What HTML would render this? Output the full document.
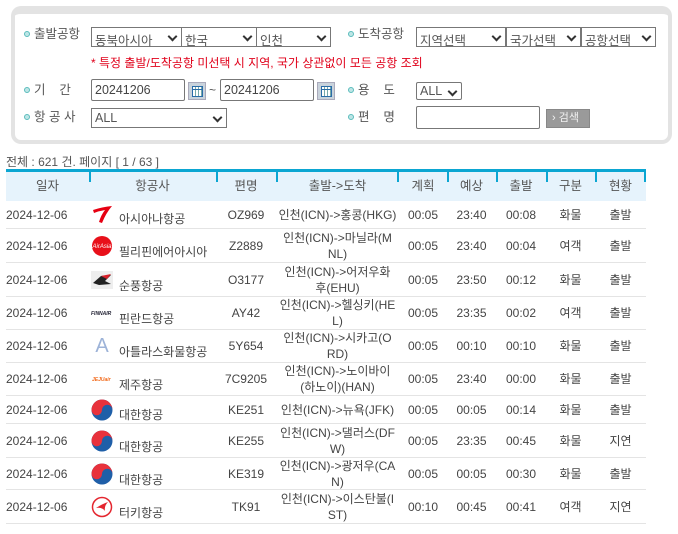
<!DOCTYPE html>
<html><head><meta charset="utf-8"><style>
*{margin:0;padding:0;box-sizing:border-box}
body{width:678px;height:534px;background:#fff;font-family:"Liberation Sans","Noto Sans CJK KR",sans-serif;font-size:12px;color:#444;position:relative;overflow:hidden}
.a{position:absolute}
.panel{left:11px;top:6px;width:661px;height:138px;border:4px solid #e3e3e3;border-top-width:8px;border-radius:10px;background:#fff}
.lbl{font-size:12.5px;color:#555;white-space:pre;line-height:14px}
.dot{width:6px;height:6px;border-radius:50%;border:1.5px solid #5bbcbc;background:#bde6e6}
.sel{border:1px solid #777;height:20px;font-size:12.5px;color:#555;padding:2px 0 0 3px;background:#fff}
.sel:after{content:"";position:absolute;right:5px;top:5px;width:5px;height:5px;border-right:2px solid #333;border-bottom:2px solid #333;transform:rotate(45deg)}
.inp{border:1px solid #777;border-radius:2px;height:22px;font-size:12.5px;color:#444;padding:3px 0 0 3px;background:#fff}
.cal{width:18px;height:18px;background:#c9d3dc;border:1px solid #aab}
.cal i{position:absolute;left:3px;top:3px;width:11px;height:11px;border:1px solid #2a6ca8;background:
linear-gradient(#2a6ca8,#2a6ca8) 0 2px/100% 1px no-repeat,
repeating-linear-gradient(90deg,transparent 0 2px,#7aa 2px 3px),#fff}
.hdr{left:6px;top:169px;width:640px;height:32px;background:#e6f3fc;border-top:3px solid #0ba6d2}
.hc{top:0;height:29px;line-height:28px;text-align:center;font-size:12.5px;color:#555}
.stub{top:0;width:2px;height:10px;background:#0ba6d2}
.row{left:6px;width:640px;border-bottom:1px solid #e4e4e4}
.c{position:absolute;top:0;height:100%;display:flex;align-items:center;justify-content:center;text-align:center;line-height:16px;font-size:12px;color:#444}
</style></head><body>
<div class="a panel"></div>

<div class="a dot" style="left:24px;top:31px"></div><div class="a lbl" style="left:34px;top:27px">출발공항</div>
<div class="a sel" style="left:91px;top:27px;width:91px">동북아시아</div>
<div class="a sel" style="left:181px;top:27px;width:76px">한국</div>
<div class="a sel" style="left:256px;top:27px;width:75px">인천</div>
<div class="a dot" style="left:348px;top:31px"></div><div class="a lbl" style="left:358px;top:27px">도착공항</div>
<div class="a sel" style="left:416px;top:27px;width:90px">지역선택</div>
<div class="a sel" style="left:506px;top:27px;width:75px">국가선택</div>
<div class="a sel" style="left:581px;top:27px;width:75px">공항선택</div>
<div class="a" style="left:91px;top:54px;color:#e0001a;font-size:12px">* 특정 출발/도착공항 미선택 시 지역, 국가 상관없이 모든 공항 조회</div>

<div class="a dot" style="left:24px;top:87px"></div><div class="a lbl" style="left:34px;top:83px">기    간</div>
<div class="a inp" style="left:91px;top:79px;width:94px">20241206</div>
<div class="a cal" style="left:188px;top:82px"><i></i></div>
<div class="a" style="left:209px;top:83px;color:#555">~</div>
<div class="a inp" style="left:220px;top:79px;width:94px">20241206</div>
<div class="a cal" style="left:317px;top:82px"><i></i></div>
<div class="a dot" style="left:348px;top:87px"></div><div class="a lbl" style="left:358px;top:83px">용    도</div>
<div class="a sel" style="left:416px;top:82px;width:46px;height:18px;border-radius:2px;padding-top:1px">ALL</div>

<div class="a dot" style="left:24px;top:114px"></div><div class="a lbl" style="left:34px;top:110px">항 공 사</div>
<div class="a sel" style="left:91px;top:108px;width:136px">ALL</div>
<div class="a dot" style="left:348px;top:114px"></div><div class="a lbl" style="left:358px;top:110px">편    명</div>
<div class="a inp" style="left:416px;top:106px;width:124px;height:23px"></div>
<div class="a" style="left:546px;top:109px;width:44px;height:19px;background:#9a9a9a;border:1px solid #888;color:#f2f2f2;font-size:11px;line-height:17px;padding-left:5px">› 검색</div>

<div class="a" style="left:6px;top:153px;color:#555;font-size:12px">전체 : 621 건. 페이지 [ 1 / 63 ]</div>

<div class="a hdr">
<div class="a hc" style="left:0;width:83px">일자</div>
<div class="a hc" style="left:83px;width:127px">항공사</div>
<div class="a hc" style="left:210px;width:60px">편명</div>
<div class="a hc" style="left:270px;width:123px">출발->도착</div>
<div class="a hc" style="left:393px;width:48px">계획</div>
<div class="a hc" style="left:441px;width:49px">예상</div>
<div class="a hc" style="left:490px;width:50px">출발</div>
<div class="a hc" style="left:540px;width:49px">구분</div>
<div class="a hc" style="left:589px;width:51px">현황</div>
<div class="a stub" style="left:83px"></div><div class="a stub" style="left:210px"></div><div class="a stub" style="left:270px"></div><div class="a stub" style="left:391px"></div><div class="a stub" style="left:441px"></div><div class="a stub" style="left:490px"></div><div class="a stub" style="left:540px"></div><div class="a stub" style="left:589px"></div><div class="a stub" style="left:638px"></div>
</div>

<div class="a row" style="top:201px;height:28px"><div class="c" style="left:0;width:83px;justify-content:flex-start">2024-12-06</div><div class="c" style="left:85px;width:125px;justify-content:flex-start"><svg width="22" height="20" viewBox="0 0 22 20"><path d="M2 5 Q11 2 21 1 Q15 8 11 18 L8 17 Q10 10 14 5 Q8 6 3 8Z" fill="#e60012"/></svg><span style="margin:8px 0 0 6px">아시아나항공</span></div><div class="c" style="left:210px;width:60px">OZ969</div><div class="c" style="left:270px;width:123px">인천(ICN)->홍콩(HKG)</div><div class="c" style="left:393px;width:48px">00:05</div><div class="c" style="left:441px;width:49px">23:40</div><div class="c" style="left:490px;width:50px">00:08</div><div class="c" style="left:540px;width:49px">화물</div><div class="c" style="left:589px;width:51px">출발</div></div>

<div class="a row" style="top:229px;height:34px"><div class="c" style="left:0;width:83px;justify-content:flex-start">2024-12-06</div><div class="c" style="left:85px;width:125px;justify-content:flex-start"><svg width="22" height="22"><circle cx="11" cy="11" r="10" fill="#e8101a"/><text x="11" y="13" font-size="6" fill="#fff" text-anchor="middle" font-style="italic">AirAsia</text></svg><span style="margin:12px 0 0 6px">필리핀에어아시아</span></div><div class="c" style="left:210px;width:60px">Z2889</div><div class="c" style="left:270px;width:123px">인천(ICN)->마닐라(M<br>NL)</div><div class="c" style="left:393px;width:48px">00:05</div><div class="c" style="left:441px;width:49px">23:40</div><div class="c" style="left:490px;width:50px">00:04</div><div class="c" style="left:540px;width:49px">여객</div><div class="c" style="left:589px;width:51px">출발</div></div>

<div class="a row" style="top:263px;height:34px"><div class="c" style="left:0;width:83px;justify-content:flex-start">2024-12-06</div><div class="c" style="left:85px;width:125px;justify-content:flex-start"><svg width="22" height="18"><rect width="22" height="18" fill="#eee"/><path d="M2 12 L10 5 L20 4 L14 10 L20 13 L8 14Z" fill="#222"/><path d="M10 5 L20 3 L16 8Z" fill="#d8202a"/></svg><span style="margin:12px 0 0 6px">순풍항공</span></div><div class="c" style="left:210px;width:60px">O3177</div><div class="c" style="left:270px;width:123px">인천(ICN)->어저우화<br>후(EHU)</div><div class="c" style="left:393px;width:48px">00:05</div><div class="c" style="left:441px;width:49px">23:50</div><div class="c" style="left:490px;width:50px">00:12</div><div class="c" style="left:540px;width:49px">화물</div><div class="c" style="left:589px;width:51px">출발</div></div>

<div class="a row" style="top:297px;height:33px"><div class="c" style="left:0;width:83px;justify-content:flex-start">2024-12-06</div><div class="c" style="left:85px;width:125px;justify-content:flex-start"><svg width="22" height="6"><text x="0" y="5" font-size="5" fill="#223" font-style="italic" font-weight="bold">FINNAIR</text></svg><span style="margin:12px 0 0 6px">핀란드항공</span></div><div class="c" style="left:210px;width:60px">AY42</div><div class="c" style="left:270px;width:123px">인천(ICN)->헬싱키(HE<br>L)</div><div class="c" style="left:393px;width:48px">00:05</div><div class="c" style="left:441px;width:49px">23:35</div><div class="c" style="left:490px;width:50px">00:02</div><div class="c" style="left:540px;width:49px">여객</div><div class="c" style="left:589px;width:51px">출발</div></div>

<div class="a row" style="top:330px;height:33px"><div class="c" style="left:0;width:83px;justify-content:flex-start">2024-12-06</div><div class="c" style="left:85px;width:125px;justify-content:flex-start"><span style="width:22px;font-size:20px;color:#9db3d8;font-family:'Liberation Sans',sans-serif">A</span><span style="margin:12px 0 0 6px">아틀라스화물항공</span></div><div class="c" style="left:210px;width:60px">5Y654</div><div class="c" style="left:270px;width:123px">인천(ICN)->시카고(O<br>RD)</div><div class="c" style="left:393px;width:48px">00:05</div><div class="c" style="left:441px;width:49px">00:10</div><div class="c" style="left:490px;width:50px">00:10</div><div class="c" style="left:540px;width:49px">화물</div><div class="c" style="left:589px;width:51px">출발</div></div>

<div class="a row" style="top:363px;height:33px"><div class="c" style="left:0;width:83px;justify-content:flex-start">2024-12-06</div><div class="c" style="left:85px;width:125px;justify-content:flex-start"><svg width="22" height="6"><text x="1" y="5" font-size="5" fill="#f26a1b" font-style="italic" font-weight="bold">JEJUair</text></svg><span style="margin:12px 0 0 6px">제주항공</span></div><div class="c" style="left:210px;width:60px">7C9205</div><div class="c" style="left:270px;width:123px">인천(ICN)->노이바이<br>(하노이)(HAN)</div><div class="c" style="left:393px;width:48px">00:05</div><div class="c" style="left:441px;width:49px">23:40</div><div class="c" style="left:490px;width:50px">00:00</div><div class="c" style="left:540px;width:49px">화물</div><div class="c" style="left:589px;width:51px">출발</div></div>

<div class="a row" style="top:396px;height:28px"><div class="c" style="left:0;width:83px;justify-content:flex-start">2024-12-06</div><div class="c" style="left:85px;width:125px;justify-content:flex-start"><svg width="22" height="22" viewBox="0 0 22 22"><circle cx="11" cy="11" r="10.5" fill="#1f5fa8"/><path d="M0.5 11 A10.5 10.5 0 0 1 21.5 11 A5.25 5.25 0 0 0 11 11 A5.25 5.25 0 0 1 0.5 11Z" fill="#e8323c"/></svg><span style="margin:10px 0 0 6px">대한항공</span></div><div class="c" style="left:210px;width:60px">KE251</div><div class="c" style="left:270px;width:123px">인천(ICN)->뉴욕(JFK)</div><div class="c" style="left:393px;width:48px">00:05</div><div class="c" style="left:441px;width:49px">00:05</div><div class="c" style="left:490px;width:50px">00:14</div><div class="c" style="left:540px;width:49px">화물</div><div class="c" style="left:589px;width:51px">출발</div></div>

<div class="a row" style="top:424px;height:34px"><div class="c" style="left:0;width:83px;justify-content:flex-start">2024-12-06</div><div class="c" style="left:85px;width:125px;justify-content:flex-start"><svg width="22" height="22" viewBox="0 0 22 22"><circle cx="11" cy="11" r="10.5" fill="#1f5fa8"/><path d="M0.5 11 A10.5 10.5 0 0 1 21.5 11 A5.25 5.25 0 0 0 11 11 A5.25 5.25 0 0 1 0.5 11Z" fill="#e8323c"/></svg><span style="margin:12px 0 0 6px">대한항공</span></div><div class="c" style="left:210px;width:60px">KE255</div><div class="c" style="left:270px;width:123px">인천(ICN)->댈러스(DF<br>W)</div><div class="c" style="left:393px;width:48px">00:05</div><div class="c" style="left:441px;width:49px">23:35</div><div class="c" style="left:490px;width:50px">00:45</div><div class="c" style="left:540px;width:49px">화물</div><div class="c" style="left:589px;width:51px">지연</div></div>

<div class="a row" style="top:458px;height:32px"><div class="c" style="left:0;width:83px;justify-content:flex-start">2024-12-06</div><div class="c" style="left:85px;width:125px;justify-content:flex-start"><svg width="22" height="22" viewBox="0 0 22 22"><circle cx="11" cy="11" r="10.5" fill="#1f5fa8"/><path d="M0.5 11 A10.5 10.5 0 0 1 21.5 11 A5.25 5.25 0 0 0 11 11 A5.25 5.25 0 0 1 0.5 11Z" fill="#e8323c"/></svg><span style="margin:12px 0 0 6px">대한항공</span></div><div class="c" style="left:210px;width:60px">KE319</div><div class="c" style="left:270px;width:123px">인천(ICN)->광저우(CA<br>N)</div><div class="c" style="left:393px;width:48px">00:05</div><div class="c" style="left:441px;width:49px">00:05</div><div class="c" style="left:490px;width:50px">00:30</div><div class="c" style="left:540px;width:49px">화물</div><div class="c" style="left:589px;width:51px">출발</div></div>

<div class="a row" style="top:490px;height:34px"><div class="c" style="left:0;width:83px;justify-content:flex-start">2024-12-06</div><div class="c" style="left:85px;width:125px;justify-content:flex-start"><svg width="22" height="22"><circle cx="11" cy="11" r="9.5" fill="#fff" stroke="#e4262f" stroke-width="1.5"/><path d="M5 12 Q11 8 17 6 Q13 10 14 15 Q11 11 5 12Z" fill="#e4262f"/></svg><span style="margin:12px 0 0 6px">터키항공</span></div><div class="c" style="left:210px;width:60px">TK91</div><div class="c" style="left:270px;width:123px">인천(ICN)->이스탄불(I<br>ST)</div><div class="c" style="left:393px;width:48px">00:10</div><div class="c" style="left:441px;width:49px">00:45</div><div class="c" style="left:490px;width:50px">00:41</div><div class="c" style="left:540px;width:49px">여객</div><div class="c" style="left:589px;width:51px">지연</div></div>
</body></html>
